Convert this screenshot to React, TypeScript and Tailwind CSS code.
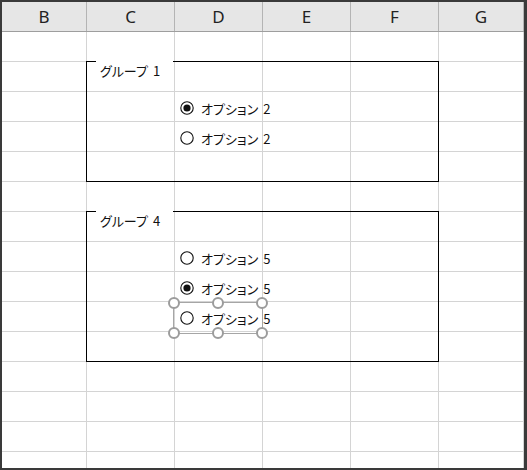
import React from 'react';

const columns = [
  { label: 'B', width: 'w-[85px]' },
  { label: 'C', width: 'w-[88px]' },
  { label: 'D', width: 'w-[88px]' },
  { label: 'E', width: 'w-[88px]' },
  { label: 'F', width: 'w-[88px]' },
  { label: 'G', width: 'w-[85px]' },
];

const rowCount = 15;

const Caption: React.FC<{ text: string; num: string }> = ({ text, num }) => (
  <span className="shrink-0 whitespace-nowrap text-[13px] leading-none text-[#111] [font-feature-settings:'palt'] flex items-center">
    {text}
    <span className="ml-[5px]">{num}</span>
  </span>
);

const Radio: React.FC<{ checked?: boolean; num: string }> = ({ checked, num }) => (
  <div className="h-[30px] shrink-0 flex items-center gap-[7px] whitespace-nowrap">
    <svg width="14" height="14" viewBox="0 0 14 14" className="shrink-0">
      <circle cx="7" cy="7" r="6.2" fill="white" stroke="#111" strokeWidth="1.1" />
      {checked && <circle cx="7" cy="7" r="3.6" fill="#111" />}
    </svg>
    <Caption text="オプション" num={num} />
  </div>
);

const GroupBox: React.FC<{ num: string; className: string; children: React.ReactNode }> = ({
  num,
  className,
  children,
}) => (
  <div className={`absolute left-[84px] w-[353px] border border-black ${className}`}>
    <div className="absolute -top-[1px] left-[9px] h-[18px] w-[77px] bg-white pl-[4px] flex items-center">
      <Caption text="グループ" num={num} />
    </div>
    <div className="pt-[31px] pl-[93px] flex flex-col items-start">{children}</div>
  </div>
);

const handleBase =
  'absolute w-[12px] h-[12px] rounded-full border-2 border-[#9c9c9c] bg-white -translate-x-1/2 -translate-y-1/2';

// selection frame drawn round the control being edited
const Selected: React.FC<{ children: React.ReactNode }> = ({ children }) => (
  <div className="relative -ml-[7px] -my-[1px] w-[90px] h-[32px] border border-[#a6a6a6] pl-[6px] flex items-center">
    {children}
    <div className={`${handleBase} left-0 top-0`} />
    <div className={`${handleBase} left-1/2 top-0`} />
    <div className={`${handleBase} left-full top-0`} />
    <div className={`${handleBase} left-0 top-full`} />
    <div className={`${handleBase} left-1/2 top-full`} />
    <div className={`${handleBase} left-full top-full`} />
  </div>
);

const App: React.FC = () => {
  return (
    <div
      className="relative w-[527px] h-[470px] overflow-hidden bg-white border-t-2 border-l-2 border-r-[3px] border-b-2 border-[#3a3a3a]"
      style={{ fontFamily: '"Noto Sans CJK JP", "Noto Sans", sans-serif' }}
    >
      {/* column headers */}
      <div className="flex h-[30px] bg-[#e6e6e6] border-b border-[#9e9e9e]">
        {columns.map((col) => (
          <div
            key={col.label}
            className={`${col.width} shrink-0 h-full flex items-center justify-center border-r border-[#b4b4b4] text-[17px] text-[#222] [font-family:'Noto_Sans',sans-serif]`}
          >
            {col.label}
          </div>
        ))}
      </div>

      {/* cells */}
      {Array.from({ length: rowCount }).map((_, r) => (
        <div key={r} className="flex h-[30px] border-b border-[#d4d4d4]">
          {columns.map((col) => (
            <div key={col.label} className={`${col.width} shrink-0 h-full border-r border-[#d4d4d4]`} />
          ))}
        </div>
      ))}

      {/* form controls floating over the sheet */}
      <GroupBox num="1" className="top-[59px] h-[121px]">
        <Radio checked num="2" />
        <Radio num="2" />
      </GroupBox>

      <GroupBox num="4" className="top-[209px] h-[151px]">
        <Radio num="5" />
        <Radio checked num="5" />
        <Selected>
          <Radio num="5" />
        </Selected>
      </GroupBox>
    </div>
  );
};

export default App;
